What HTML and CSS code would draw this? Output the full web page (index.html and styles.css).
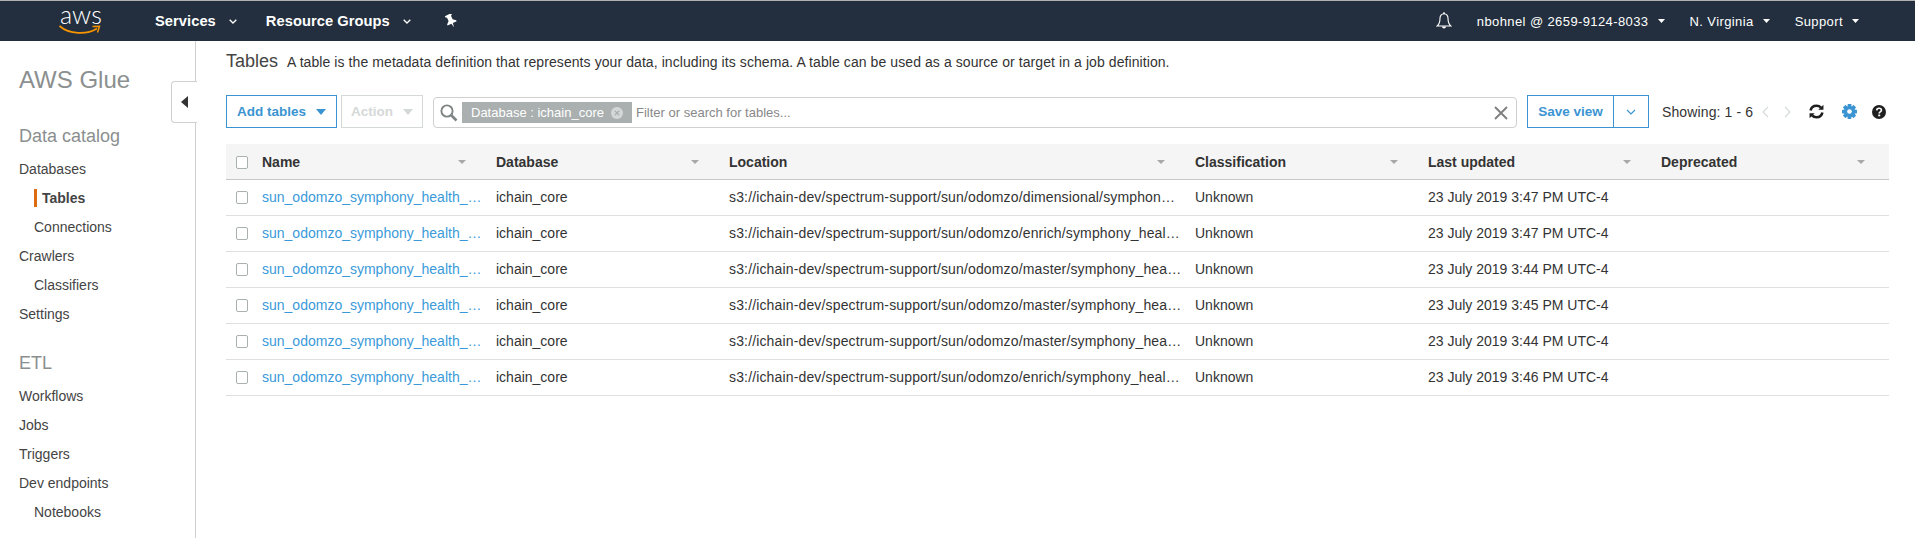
FILE: index.html
```html
<!DOCTYPE html>
<html lang="en">
<head>
<meta charset="utf-8">
<title>AWS Glue - Tables</title>
<link rel="stylesheet" href="styles.css">
</head>
<body>
<header class="topbar">
  <div class="logo">
    <span class="logo-text">aws</span>
    <svg class="logo-smile" viewBox="0 0 42 10" width="42" height="10"><path d="M.5 1C10 9.500 28 10 38 3.500" fill="none" stroke="#f79400" stroke-width="1.700"/><path d="M33.500 1.500L40.500 1.200 38.500 7.500" fill="none" stroke="#f79400" stroke-width="1.500"/></svg>
  </div>
  <nav class="nav-left">
    <a class="nav-b">Services<svg class="chev" viewBox="0 0 8 5" width="8" height="5"><path d="M.7.7L4 4l3.300-3.300" fill="none" stroke="#fff" stroke-width="1.300"/></svg></a>
    <a class="nav-b">Resource Groups<svg class="chev" viewBox="0 0 8 5" width="8" height="5"><path d="M.7.7L4 4l3.300-3.300" fill="none" stroke="#fff" stroke-width="1.300"/></svg></a>
    <svg class="pin" viewBox="0 0 14 14" width="14" height="14"><path transform="rotate(-25 7 7)" d="M3.500 0h7v1.500l-1.300.8v3.700l2.800 2.500v1.200H7.800L7 14l-.8-4.300H2V8.500L4.800 6V2.300L3.500 1.500z" fill="#fff"/></svg>
  </nav>
  <div class="nav-right">
    <svg class="bell" viewBox="0 0 16 18" width="16" height="18"><path d="M8 1.800C5.400 1.800 4 3.900 4 6.300c0 3.700-.8 6-2.800 7.700h13.600C12.800 12.300 12 10 12 6.300c0-2.400-1.400-4.500-4-4.500z" fill="none" stroke="#fff" stroke-width="1.100"/><path d="M6 14.500a2 2 0 0 0 4 0z" fill="#fff"/><circle cx="8" cy="1.300" r="1" fill="#fff"/></svg>
    <a class="nav-r user">nbohnel @ 2659-9124-8033<svg class="caret" viewBox="0 0 7 4" width="7" height="4"><path d="M0 0h7L3.500 4z" fill="#fff"/></svg></a>
    <a class="nav-r region">N. Virginia<svg class="caret" viewBox="0 0 7 4" width="7" height="4"><path d="M0 0h7L3.500 4z" fill="#fff"/></svg></a>
    <a class="nav-r support">Support<svg class="caret" viewBox="0 0 7 4" width="7" height="4"><path d="M0 0h7L3.500 4z" fill="#fff"/></svg></a>
  </div>
</header>
<div class="layout">
  <aside class="sidebar">
    <h1 class="brand">AWS Glue</h1>
    <h2 class="section first">Data catalog</h2>
    <a class="item">Databases</a>
    <a class="item sub active">Tables</a>
    <a class="item sub">Connections</a>
    <a class="item">Crawlers</a>
    <a class="item sub">Classifiers</a>
    <a class="item">Settings</a>
    <h2 class="section">ETL</h2>
    <a class="item">Workflows</a>
    <a class="item">Jobs</a>
    <a class="item">Triggers</a>
    <a class="item">Dev endpoints</a>
    <a class="item sub">Notebooks</a>
    <div class="collapse"><svg viewBox="0 0 7 12" width="7" height="12"><path d="M7 0v12L0 6z" fill="#333"/></svg></div>
  </aside>
  <main class="main">
    <div class="title-row">
      <span class="title">Tables</span>
      <span class="desc">A table is the metadata definition that represents your data, including its schema. A table can be used as a source or target in a job definition.</span>
    </div>
    <div class="toolbar">
      <button class="btn primary add">Add tables <svg class="btn-caret" viewBox="0 0 10 6" width="10" height="6"><path d="M0 0h10L5 6z" fill="#3b94d2"/></svg></button>
      <button class="btn disabled action">Action <svg class="btn-caret" viewBox="0 0 10 6" width="10" height="6"><path d="M0 0h10L5 6z" fill="#d5d8d8"/></svg></button>
      <div class="search">
        <svg class="mag" viewBox="0 0 18 18" width="18" height="18"><circle cx="7" cy="7" r="5.600" fill="none" stroke="#7f8484" stroke-width="1.900"/><path d="M11 11l5.500 5.500" stroke="#7f8484" stroke-width="2.600"/></svg>
        <span class="chip">Database : ichain_core<svg class="chip-x" viewBox="0 0 12 12" width="12" height="12"><circle cx="6" cy="6" r="6" fill="#d4d7d7"/><path d="M3.800 3.800l4.400 4.400M8.200 3.800l-4.400 4.400" stroke="#aab0b0" stroke-width="1.300"/></svg></span>
        <span class="placeholder">Filter or search for tables...</span>
        <svg class="clear" viewBox="0 0 14 14" width="14" height="14"><path d="M1 1l12 12M13 1L1 13" stroke="#7f7f7f" stroke-width="1.900"/></svg>
      </div>
      <div class="split">
        <button class="btn primary save">Save view</button>
        <button class="btn primary more"><svg viewBox="0 0 10 6" width="10" height="6"><path d="M1 1l4 4 4-4" fill="none" stroke="#3b94d2" stroke-width="1.200"/></svg></button>
      </div>
      <span class="showing">Showing: 1 - 6</span>
      <svg class="page prev" viewBox="0 0 7 12" width="7" height="12"><path d="M6 1L1 6l5 5" fill="none" stroke="#d5d8d8" stroke-width="1.100"/></svg>
      <svg class="page next" viewBox="0 0 7 12" width="7" height="12"><path d="M1 1l5 5-5 5" fill="none" stroke="#d5d8d8" stroke-width="1.100"/></svg>
      <svg class="refresh" viewBox="0 0 14 14" width="15" height="15"><path d="M1.500 6C2 3.300 4.200 1.600 7 1.600c1.700 0 3.100.6 4.100 1.800" fill="none" stroke="#1f1f1f" stroke-width="2.400"/><path d="M13.500.6v4.800H8.700z" fill="#1f1f1f"/><path d="M12.500 8c-.5 2.700-2.700 4.400-5.500 4.400-1.700 0-3.100-.6-4.100-1.800" fill="none" stroke="#1f1f1f" stroke-width="2.400"/><path d="M.5 13.400V8.600h4.800z" fill="#1f1f1f"/></svg>
      <svg class="gear" viewBox="0 0 16 16" width="15" height="15"><g fill="#3b94d2"><circle cx="8" cy="8" r="6"/><rect x="6" y="0" width="4" height="16" rx=".6"/><rect x="6" y="0" width="4" height="16" rx=".6" transform="rotate(45 8 8)"/><rect x="6" y="0" width="4" height="16" rx=".6" transform="rotate(90 8 8)"/><rect x="6" y="0" width="4" height="16" rx=".6" transform="rotate(135 8 8)"/></g><circle cx="8" cy="8" r="2.500" fill="#fff"/></svg>
      <svg class="help" viewBox="0 0 14 14" width="14" height="14"><circle cx="7" cy="7" r="7" fill="#1f1f1f"/><path d="M4.700 5.400C4.800 4 5.800 3.300 7.100 3.300c1.300 0 2.300.8 2.300 2 0 1.700-2.200 1.600-2.200 3.100" fill="none" stroke="#fff" stroke-width="1.600"/><rect x="6.200" y="9.500" width="2" height="1.800" fill="#fff"/></svg>
    </div>
    <table class="grid">
      <thead>
        <tr>
          <th class="c-check"><span class="cb"></span></th>
          <th class="c-name"><div class="th">Name<i class="sort"></i></div></th>
          <th class="c-db"><div class="th">Database<i class="sort"></i></div></th>
          <th class="c-loc"><div class="th">Location<i class="sort"></i></div></th>
          <th class="c-class"><div class="th">Classification<i class="sort"></i></div></th>
          <th class="c-upd"><div class="th">Last updated<i class="sort"></i></div></th>
          <th class="c-dep"><div class="th">Deprecated<i class="sort"></i></div></th>
        </tr>
      </thead>
      <tbody>
        <tr><td><span class="cb"></span></td><td class="name"><a>sun_odomzo_symphony_health_…</a></td><td>ichain_core</td><td class="loc">s3://ichain-dev/spectrum-support/sun/odomzo/dimensional/symphon…</td><td>Unknown</td><td>23 July 2019 3:47 PM UTC-4</td><td></td></tr>
        <tr><td><span class="cb"></span></td><td class="name"><a>sun_odomzo_symphony_health_…</a></td><td>ichain_core</td><td class="loc">s3://ichain-dev/spectrum-support/sun/odomzo/enrich/symphony_heal…</td><td>Unknown</td><td>23 July 2019 3:47 PM UTC-4</td><td></td></tr>
        <tr><td><span class="cb"></span></td><td class="name"><a>sun_odomzo_symphony_health_…</a></td><td>ichain_core</td><td class="loc">s3://ichain-dev/spectrum-support/sun/odomzo/master/symphony_hea…</td><td>Unknown</td><td>23 July 2019 3:44 PM UTC-4</td><td></td></tr>
        <tr><td><span class="cb"></span></td><td class="name"><a>sun_odomzo_symphony_health_…</a></td><td>ichain_core</td><td class="loc">s3://ichain-dev/spectrum-support/sun/odomzo/master/symphony_hea…</td><td>Unknown</td><td>23 July 2019 3:45 PM UTC-4</td><td></td></tr>
        <tr><td><span class="cb"></span></td><td class="name"><a>sun_odomzo_symphony_health_…</a></td><td>ichain_core</td><td class="loc">s3://ichain-dev/spectrum-support/sun/odomzo/master/symphony_hea…</td><td>Unknown</td><td>23 July 2019 3:44 PM UTC-4</td><td></td></tr>
        <tr><td><span class="cb"></span></td><td class="name"><a>sun_odomzo_symphony_health_…</a></td><td>ichain_core</td><td class="loc">s3://ichain-dev/spectrum-support/sun/odomzo/enrich/symphony_heal…</td><td>Unknown</td><td>23 July 2019 3:46 PM UTC-4</td><td></td></tr>
      </tbody>
    </table>
  </main>
</div>
</body>
</html>
```

FILE: styles.css
```css
* { box-sizing: border-box; }
html, body { margin: 0; height: 538px; overflow: hidden; }
body { font-family: "Liberation Sans", Arial, sans-serif; font-size: 14px; color: #444; background: #fff; }

.topbar { height: 41px; background: #232f3e; border-top: 1px solid #b0b0b0; display: flex; align-items: center; color: #fff; }
.logo { width: 155px; padding-left: 59px; display: flex; flex-direction: column; align-items: flex-start; height: 40px; }
.logo-text { font-size: 25px; line-height: 24px; margin-top: 1px; margin-left: 1px; font-family: "Lato", "Liberation Sans", sans-serif; font-weight: 300; }
.logo-smile { margin-top: -1px; }
.nav-left { display: flex; align-items: center; }
.nav-b { font-weight: 700; font-size: 14.7px; letter-spacing: .05px; display: flex; align-items: center; margin-right: 29px; white-space: pre; }
.chev { margin-left: 13px; }
.pin { margin-left: 4px; }
.nav-right { margin-left: auto; display: flex; align-items: center; padding-right: 56px; }
.nav-r { font-size: 13px; letter-spacing: .4px; display: flex; align-items: center; white-space: pre; }
.caret { margin-left: 9px; }
.bell { margin-right: 25px; }
.user { margin-right: 25px; }
.region { margin-right: 25px; }

.layout { display: flex; height: 497px; }
.sidebar { width: 196px; flex: none; border-right: 1px solid #d0d0d0; padding: 0 0 0 19px; position: relative; }
.brand { margin: 21px 0 0; font-size: 24px; line-height: 36px; font-weight: 400; color: #8b8f8f; }
.section { margin: 0; font-size: 18px; line-height: 24px; font-weight: 400; color: #8b8f8f; }
.section.first { margin-top: 26px; margin-bottom: 7px; }
.section:not(.first) { margin-top: 22px; margin-bottom: 7px; }
.item { display: block; height: 29px; line-height: 29px; color: #444; font-size: 14px; }
.item.sub { margin-left: 15px; }
.item.active { font-weight: 700; position: relative; padding-left: 8px; }
.item.active::before { content: ""; position: absolute; left: 0; top: 5px; width: 3px; height: 18px; background: #dd6b10; }
.collapse { position: absolute; left: 171px; top: 40px; width: 26px; height: 42px; background: #fff; border: 1px solid #d0d0d0; border-right: 0; border-radius: 4px 0 0 4px; display: flex; align-items: center; padding-left: 9px; }

.main { flex: 1; min-width: 0; padding: 0 26px 0 30px; }
.title-row { display: flex; align-items: baseline; height: 26px; color: #444; line-height: 22px; margin-top: 9px; }
.title { font-size: 18px; margin-right: 9px; }
.desc { font-size: 14px; letter-spacing: .08px; color: #333; }
.toolbar { display: flex; align-items: center; height: 33px; margin-top: 19px; }
.btn { height: 33px; font-family: inherit; font-size: 13.5px; background: #fff; padding: 0; display: flex; align-items: center; justify-content: center; }
.btn.primary { border: 1px solid #3b94d2; color: #3b94d2; font-weight: 700; }
.btn.disabled { border: 1px solid #d5d8d8; color: #d5d8d8; font-weight: 700; }
.btn-caret { margin-left: 10px; }
.add { width: 111px; }
.action { width: 82px; margin-left: 4px; }
.search { margin-left: 10px; width: 1084px; height: 31px; align-self: flex-end; border: 1px solid #d0d0d0; border-radius: 4px; display: flex; align-items: center; padding-left: 6px; }
.mag { flex: none; margin-right: 4px; margin-top: 1px; }
.chip { height: 21px; background: #aab0b0; color: #fff; display: flex; align-items: center; padding-left: 9px; width: 170px; font-size: 13px; white-space: pre; flex: none; }
.chip-x { margin-left: 7px; }
.placeholder { margin-left: 4px; color: #888; font-size: 13px; }
.clear { margin-left: auto; margin-right: 8px; }
.split { display: flex; margin-left: 10px; }
.save { width: 87px; }
.more { width: 36px; margin-left: -1px; }
.showing { margin-left: 13px; color: #333; font-size: 14px; letter-spacing: .12px; white-space: nowrap; }
.page { flex: none; }
.prev { margin-left: 9px; }
.next { margin-left: 15px; }
.refresh { margin-left: 18px; flex: none; }
.gear { margin-left: 18px; flex: none; }
.help { margin-left: 15px; flex: none; }

.grid { width: 1663px; table-layout: fixed; border-collapse: collapse; margin-top: 16px; font-size: 14px; }
.grid th { height: 35px; background: #f5f5f5; border-bottom: 1px solid #c6c6c6; text-align: left; color: #333; font-weight: 700; padding: 2px 0 0; }
.grid td { height: 36px; border-bottom: 1px solid #dfdfdf; padding: 0; color: #333; white-space: nowrap; overflow: hidden; }
.grid td:nth-child(n+3), .grid th:nth-child(n+3) { padding-left: 9px; }
.grid td.loc { letter-spacing: .15px; }
.c-check { width: 36px; }
.c-name { width: 225px; }
.c-db { width: 233px; }
.c-loc { width: 466px; }
.c-class { width: 233px; }
.c-upd { width: 233px; }
.th { display: flex; align-items: center; }
.sort { margin-left: auto; margin-right: 21px; width: 0; height: 0; border-left: 4px solid transparent; border-right: 4px solid transparent; border-top: 4px solid #a8a8a8; }
.c-dep .sort { margin-right: 24px; }
.cb { display: block; width: 12px; height: 13px; margin-left: 10px; border: 1px solid #aab0b0; border-radius: 2px; background: #fff; }
.name a { color: #3a9ad9; }
```
